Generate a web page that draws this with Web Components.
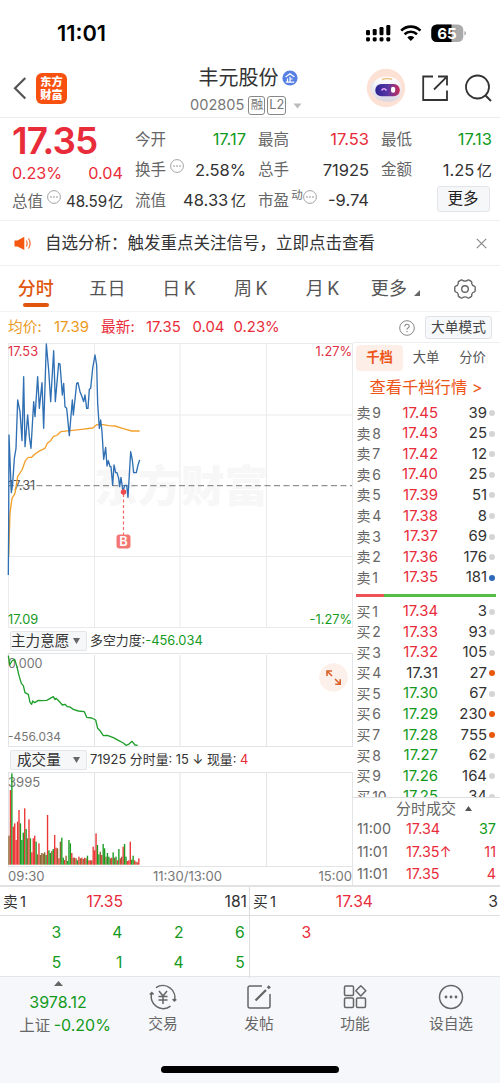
<!DOCTYPE html>
<html lang="zh-CN">
<head>
<meta charset="utf-8">
<title>丰元股份 002805</title>
<style>
html,body{margin:0;padding:0;background:#fff}
body{width:500px;height:1083px;overflow:hidden;font-family:Inter,"Noto Sans CJK SC",sans-serif;color:#333;line-height:1}
</style>
</head>
<body>
<stock-app></stock-app>
<script>
const BASE=`*{box-sizing:border-box}:host{display:block;line-height:1}svg{display:block;flex:none}
.r{color:#e82c3a}.g{color:#139a1c}.k{color:#333}.row{display:flex;align-items:center}`;
function define(name,css,html){
  customElements.define(name,class extends HTMLElement{
    constructor(){
      super();
      this.attachShadow({mode:'open'}).innerHTML=`<style>${BASE}${css}</style>${typeof html==='function'?html(this):html}`;
    }
  });
}

define('status-bar',`:host{height:62px}
.row{height:62px;padding:5px 33.5px 0 57px;justify-content:space-between}
.time{font-size:21.8px;font-weight:600;color:#000;letter-spacing:0;margin-top:1px}`,
`<div class="row"><span class="time">11:01</span>
<svg width="102" height="20" viewBox="0 0 102 20">
<g fill="#000"><rect x="1" y="6" width="4" height="5.3" rx="1.2"/><rect x="7.7" y="5" width="4" height="6.3" rx="1.2"/><rect x="14.5" y="3" width="4" height="8.3" rx="1.2"/><rect x="21.3" y="1" width="4" height="10.3" rx="1.2"/>
<rect x="1" y="13.3" width="4" height="4.2" rx="1.4"/><rect x="7.7" y="13.3" width="4" height="4.2" rx="1.4"/><rect x="14.5" y="13.3" width="4" height="4.2" rx="1.4"/><rect x="21.3" y="13.3" width="4" height="4.2" rx="1.4"/></g>
<g fill="none" stroke="#000" stroke-width="2.6"><path d="M36.2 6.6a13.7 13.7 0 0 1 19.2 0"/><path d="M39.6 10.3a8.9 8.9 0 0 1 12.4 0"/></g><path d="M42.3 13.4a5 5 0 0 1 7 0l-3.5 3.6z" fill="#000"/>
<clipPath id="b"><rect x="66.3" y=".5" width="32" height="17.6" rx="5.5"/></clipPath>
<g clip-path="url(#b)"><rect x="66" y="0" width="34" height="20" fill="#aaa"/><rect x="66" y="0" width="20.5" height="20" fill="#000"/></g>
<path d="M99.4 7v4.4q1.6-.5 1.6-2.2t-1.6-2.2z" fill="#aaa"/>
<text x="82" y="14.6" text-anchor="middle" font-size="15.2" font-weight="700" fill="#fff" font-family="Inter">65</text></svg></div>`);

define('app-logo',`:host{width:31px;height:31px;border-radius:6px;background:#f8500f;color:#fff;padding:2.5px 0 0 0;text-align:center;font-family:"Noto Sans CJK SC",sans-serif;font-weight:900;font-size:11.2px;line-height:13px}
div{height:13px}`,`<div>东方</div><div>财富</div>`);

define('robot-avatar',`:host{width:40px;height:40px}`,
`<svg width="40" height="40" viewBox="0 0 40 40"><defs><linearGradient id="f"><stop offset="0" stop-color="#2b2391"/><stop offset=".5" stop-color="#5636a5"/><stop offset="1" stop-color="#c92c58"/></linearGradient>
<linearGradient id="h" x2="0" y2="1"><stop offset="0" stop-color="#fff"/><stop offset="1" stop-color="#d9d6e2"/></linearGradient></defs>
<circle cx="20" cy="20" r="19.2" fill="#fde1d4"/><ellipse cx="7.5" cy="20" rx="3.2" ry="6.5" fill="#e8e5ec"/><path d="M6.5 19Q8 9 21 8.500Q34 9 35.500 20Q36 31 28 33Q19 35 11 31Q6 28 6.500 19Z" fill="url(#h)"/>
<path d="M16 11.500Q21 9.500 26 11.500" stroke="#e8c587" stroke-width="1.600" fill="none"/><rect x="9.3" y="16" width="24.500" height="12.300" rx="6" fill="url(#f)"/><path d="M15.500 22.500q2.500-3.500 5 0" fill="none" stroke="#eaf" stroke-width="1.500"/><rect x="25" y="18.700" width="4.200" height="6" rx="2" fill="#fff"/></svg>`);

define('stock-header',`:host{height:56px;border-bottom:1px solid #ececec}
.row{height:55px}
.row .row{padding-bottom:3px}
.row .left{width:178px;padding-left:13px;gap:8px}
.mid{width:140px;display:flex;flex-direction:column;align-items:center;gap:6px;padding-top:2px}
.name{font-size:20px;gap:3px;display:flex;align-items:center;height:24px}
.sub{display:flex;align-items:center;gap:4px;font-size:14.600px;color:#777;height:19px;padding-left:1px;width:118px}
.box{border:1px solid #888;border-radius:3px;height:18.500px;font-size:12.500px;display:flex;align-items:center;justify-content:center;width:17px;margin-right:-2px}
.l2{width:18.500px;margin-right:3px;font-size:12.800px}
.right{margin-left:auto;gap:16px;padding-right:7px}`,
`<div class="row"><div class="row left"><svg width="15" height="24" viewBox="0 0 15 24"><path d="M12.300 2L2 12.300L12.300 22.500" fill="none" stroke="#555" stroke-width="2.200"/></svg><app-logo></app-logo></div>
<div class="mid"><div class="name"><span>丰元股份</span><svg width="16" height="16" viewBox="0 0 16 16"><circle cx="8" cy="8" r="7.600" fill="#5680e3"/><path d="M3.600 7L8 3.800L12.400 7M8 6.800V12M8 9H10.600M5.500 8.400V12M3.800 12.200H12.200" stroke="#fff" stroke-width="1.200" fill="none"/></svg></div>
<div class="sub"><span>002805</span><span class="box">融</span><span class="box l2">L2</span><svg width="9" height="6"><path d="M.5 .5H8.500L4.500 5.500Z" fill="#bbb"/></svg></div></div>
<div class="row right"><robot-avatar></robot-avatar>
<svg width="26" height="28" viewBox="0 0 26 28"><path d="M11 2.500H1.200V26H25V16.500M16 2.500H25V11.500M24.700 2.800L12 15.500" fill="none" stroke="#333" stroke-width="1.800"/></svg>
<svg width="28" height="28" viewBox="0 0 28 28" style="margin-left:1px"><circle cx="12.500" cy="13" r="11.500" fill="none" stroke="#333" stroke-width="1.800"/><path d="M20.500 21.500L26 27" stroke="#333" stroke-width="1.900"/></svg></div></div>`);

define('hint-dots',`:host{width:14px;height:14px;display:inline-block;flex:none}`,
`<svg width="14" height="14" viewBox="0 0 14 14"><circle cx="7" cy="7" r="6.400" fill="none" stroke="#999" stroke-width=".9"/><g fill="#888"><circle cx="4" cy="7" r=".8"/><circle cx="7" cy="7" r=".8"/><circle cx="10" cy="7" r=".8"/></g></svg>`);

define('quote-panel',`:host{height:103px;border-bottom:1px solid #f0f0f0;padding:6px 8px 0 12px}
.grid{display:grid;grid-template-columns:repeat(4,111px);column-gap:12px}
.col{display:flex;flex-direction:column}
.c{height:30.700px;display:flex;align-items:center;justify-content:space-between;font-size:16.500px}
.c label{display:flex;align-items:center;color:#666;font-size:15.500px;gap:4px}
.big{height:35px;font-size:36.900px;font-weight:600;letter-spacing:-.9px;display:flex;align-items:center}
.p{height:28px;font-size:16.200px}.t{height:28.500px}
.t>span{font-size:15.200px;letter-spacing:-.15px}
u{text-decoration:none;font-size:15.200px;margin-left:2.500px}
sup{font-size:11.500px;align-self:flex-start;margin:-3px -4px 0 -5px;line-height:1}
button{font:15.500px Inter,"Noto Sans CJK SC";line-height:1;width:53px;height:26px;border:1px solid #e3e5ea;background:#f6f7f9;border-radius:3px;color:#222;margin:-3px 2.500px 0 auto;padding:0}
hint-dots{margin-top:-8px}`,
`<div class="grid">
<div class="col"><div class="big r">17.35</div><div class="c p r"><span>0.23%</span><span>0.04</span></div><div class="c t"><label>总值<hint-dots></hint-dots></label><span>48.59<u style="margin-left:1px">亿</u></span></div></div>
<div class="col"><div class="c"><label>今开</label><span class="g">17.17</span></div><div class="c"><label>换手<hint-dots></hint-dots></label><span>2.58%</span></div><div class="c"><label>流值</label><span>48.33<u>亿</u></span></div></div>
<div class="col"><div class="c"><label>最高</label><span class="r">17.53</span></div><div class="c"><label>总手</label><span>71925</span></div><div class="c"><label>市盈<sup>&nbsp;动</sup><hint-dots></hint-dots></label><span>-9.74</span></div></div>
<div class="col"><div class="c"><label>最低</label><span class="g">17.13</span></div><div class="c"><label>金额</label><span>1.25<u>亿</u></span></div><div class="c"><button>更多</button></div></div>
</div>`);

define('notice-bar',`:host{height:45px;border-bottom:1px solid #f0f0f0}
.row{height:44px;padding:0 13px 0 14px}
span{font-size:16.500px;margin-left:13px;flex:1}`,
`<div class="row"><svg width="18" height="15" viewBox="0 0 18 15"><path d="M.5 4.500H3.500L10.300 .8V14L3.500 10.500H.5Z" fill="#f4570f"/><path d="M12.200 4.500q2 3 0 6M14.500 2.500q3.200 5 0 10" fill="none" stroke="#f4773a" stroke-width="1.300"/></svg><span><slot></slot></span><svg width="11" height="11" viewBox="0 0 11 11"><path d="M.8 .8L10.200 10.200M10.200 .8L.8 10.200" stroke="#888" stroke-width="1.200"/></svg></div>`);

define('period-tabs',`:host{height:46px;border-bottom:1px solid #f3f3f3}
.bar{display:grid;grid-template-columns:repeat(5,71.700px) 66px 81px;height:45px}
div div{display:flex;align-items:center;justify-content:center;font-size:18px;color:#555;position:relative;letter-spacing:.2px;word-spacing:-2px}
.on{color:#e0560f;font-weight:500}.on::after{content:"";position:absolute;left:23px;bottom:4px;width:26px;height:4px;border-radius:2px;background:#e0560f}
.tri{align-self:flex-end;margin:0 0 15px 7px}`,
`<div class="bar"><div class="on">分时</div><div>五日</div><div>日 K</div><div>周 K</div><div>月 K</div><div style="padding-left:8px">更多<svg class="tri" width="6" height="6"><path d="M6 0V6H0Z" fill="#666"/></svg></div>
<div><svg width="22" height="20" viewBox="0 0 22 20"><path d="M7.300 .9Q8.200 .7 9 1.600Q11 2.700 13 1.600Q13.800 .7 14.700 .9L17.500 2.600Q18 3.300 17.700 4.500Q18 6.500 20.300 7.200Q21.200 7.700 21.200 8.300V11.700Q21.200 12.300 20.300 12.800Q18 13.500 17.700 15.500Q18 16.700 17.500 17.400L14.700 19.100Q13.800 19.300 13 18.400Q11 17.300 9 18.400Q8.200 19.300 7.300 19.100L4.500 17.400Q4 16.700 4.300 15.500Q4 13.500 1.700 12.800Q.8 12.300 .8 11.700V8.300Q.8 7.700 1.700 7.200Q4 6.500 4.300 4.500Q4 3.300 4.500 2.600Z" fill="none" stroke="#666" stroke-width="1.400"/><circle cx="11" cy="10" r="3.300" fill="none" stroke="#666" stroke-width="1.400"/></svg></div></div>`);

define('price-line',`:host{height:30px}
.row{height:30px;padding:1px 8px 0;font-size:14.900px}
.c{font-size:14.700px;width:46px}
.o{color:#eb9a1d}.m{margin-left:10px;font-size:13.700px;border:1px solid #e0e2e7;background:#f7f8fa;border-radius:3px;width:67px;height:23px;display:flex;align-items:center;justify-content:center;color:#444}`,
`<div class="row"><span class="o c">均价:</span><span class="o" style="width:47px">17.39</span><span class="r c" style="width:45px">最新:</span><span class="r" style="width:46.500px">17.35</span><span class="r" style="width:41px">0.04</span><span class="r">0.23%</span>
<svg width="16" height="16" viewBox="0 0 16 16" style="margin-left:auto"><circle cx="8" cy="8" r="7.300" fill="none" stroke="#888"/><path d="M5.800 6.400Q5.900 4.200 8 4.200T10.200 6.200Q10.200 7.200 9 7.900T8 9.700M8 10.900V12.200" fill="none" stroke="#888" stroke-width="1.100"/></svg><div class="m">大单模式</div></div>`);

define('price-chart',`:host{height:286px}text{font-size:12.800px}`,
`<svg width="353" height="286" viewBox="0 342 353 286">
<text x="94" y="502" style="font-size:43.500px" font-weight="900" fill="#f7f7f7">东方财富</text>
<path d="M8 343.500H353M8 415H353M8 556.500H353M8 627.500H353M8.500 343V628M94.500 343V628M180 343V628M266.500 343V628M352.500 343V628" stroke="#e9eaec" fill="none"/>
<text x="8" y="355.500" fill="#e02d42">17.53</text><text x="352" y="355.500" text-anchor="end" fill="#e02d42">1.27%</text>
<text x="8" y="624" fill="#139a1c">17.09</text><text x="352" y="624" text-anchor="end" fill="#139a1c">-1.27%</text>
<text x="8" y="490" fill="#555">17.31</text>
<path d="M8 485.700H352" stroke="#777" stroke-width="1" stroke-dasharray="6 3.500"/>
<g transform="translate(0 340) scale(.33333)" fill="none" stroke-linejoin="round">
<polyline stroke="#f2a02b" stroke-width="4" points="26,650 28,580 30,520 36,475 45,460 53,410 66,390 76,362 85,352 95,352 105,342 120,332 135,325 142,310 152,302 160,290 172,285 182,275 210,272 245,268 278,264 290,254 310,254 325,257 345,258 370,266 395,273 419,273"/>
<polyline stroke="#2f6fb3" stroke-width="4" points="25,705 26,560 27,285 30,360 34,458 38,430 43,355 48,325 53,180 60,215 66,302 71,110 75,320 83,225 88,290 93,325 101,185 105,230 113,110 118,205 126,128 131,265 139,12 146,90 152,185 161,32 166,185 176,70 180,72 187,165 191,130 195,200 200,205 208,287 217,180 220,225 230,130 234,128 240,155 246,170 251,185 255,165 260,205 264,205 268,148 272,145 278,85 285,45 290,75 293,190 298,265 302,240 306,275 311,358 317,322 321,378 325,362 330,380 333,380 338,436 342,375 347,398 351,398 356,415 359,440 363,412 369,455 374,436 380,436 384,472 392,335 397,360 401,398 409,398 414,375 419,360"/></g>
<path d="M123.500 494V535" stroke="#ef6a68" stroke-dasharray="3 2.500" stroke-width="1.200"/><circle cx="123.500" cy="492" r="2.700" fill="#f04a4d"/>
<rect x="116.500" y="534.500" width="14" height="14" rx="3" fill="#f47673"/><text x="123.500" y="546" text-anchor="middle" fill="#fff" font-weight="600">B</text></svg>`);

define('indicator-row',`:host{height:25px}
.row{height:25px;padding:1.500px 0 0 10px;font-size:13.300px;gap:3px}
.sel{width:77px;height:20px;background:#f6f7f9;border:1px solid #e3e5e8;border-radius:2px;font-size:14.600px;display:flex;align-items:center;justify-content:space-between;padding:0 6px 0 0}
.v{white-space:pre;font-size:12.900px}`,
`<div class="row"><div class="sel"><slot name="name"></slot><svg width="7" height="6"><path d="M0 0H7L3.500 6Z" fill="#666"/></svg></div><div class="v"><slot></slot></div></div>`);

define('intent-chart',`:host{height:94px;position:relative}text{font-size:12.500px;fill:#777}
.x{position:absolute;left:319px;top:10px}`,
`<svg width="353" height="94" viewBox="0 653 353 94"><path d="M8 653.500H353M8 746.500H353M8.500 653V747M94.500 655V747M180 655V747M266.500 655V747M352.500 653V747" stroke="#e3e4e6" fill="none"/>
<text x="8" y="667.500">0.000</text><text x="8" y="741" style="font-size:11.900px">-456.034</text>
<g transform="translate(0 625) scale(.33333)"><polyline fill="none" stroke="#1e9e2a" stroke-width="4" stroke-linejoin="round" points="25,92 29,120 36,108 44,103 50,122 57,152 64,175 70,182 75,203 85,208 90,232 95,238 98,228 104,233 115,226 125,227 140,226 160,215 165,224 168,220 176,227 187,240 195,238 202,245 210,246 220,253 235,258 253,260 260,277 275,279 287,285 293,310 300,317 310,332 322,331 340,338 355,346 370,354 378,361 386,358 396,349 405,360 413,361"/></g></svg>
<svg class="x" width="29" height="29" viewBox="0 0 29 29"><circle cx="14.500" cy="14.500" r="14.300" fill="#fdf0ea"/><path d="M13 13L8 8M8 13V8H13M16 16L21 21M16.200 21.200H21.200V16.200" fill="none" stroke="#d9622b" stroke-width="1.600"/></svg>`);

const VOL='632n 495r 445g 605r 595r 645r 590r 555r 595g 645g 623g 550r 612g 640n 583r 640g 682r 640r 632r 650g 688n 655r 690n 684n 686n 682n 690g 570r 676g 684g 678n 672g 630r 668r 670n 700r 650n 638g 698g 705r 692n 708g 645g 655g 684r 698n 698r 700n 706g 695r 700n 698r 702n 698r 700n 692g 706r 706r 706n 665r 676r 625r 660g 688g 680n 690r 657g 670g 695n 684g 695g 700n 698r 682g 698n 695g 706r 672g 700r 695n 665r 657g 695g 708r 706r 650r 704g 692g 706r 710n 712r 700r'.split(' ');
define('volume-chart',`:host{height:113px}text{font-size:13.100px;fill:#777}`,()=>{
  const col={r:'#ec3535',g:'#1a9c21',n:'#8d6531'};
  const bars=VOL.map((v,i)=>{const t=parseInt(v);return `<rect x="${25+i*4.28}" y="${t}" width="4.100" height="${719-t}" fill="${col[v.at(-1)]}"/>`}).join('');
  return `<svg width="353" height="113" viewBox="0 772 353 113"><path d="M8 772.500H353M8 866.500H353M8.500 772V866M94.500 772V866M180 772V866M266.500 772V866M352.500 772V885" stroke="#e3e4e6" fill="none"/>
<text x="8" y="786.500">3995</text><g transform="translate(0 625) scale(.33333)">${bars}</g>
<text x="8" y="881">09:30</text><text x="187.500" y="881" text-anchor="middle">11:30/13:00</text><text x="352" y="881" text-anchor="end">15:00</text></svg>`});

const SELL=[[9,'17.45',39],[8,'17.43',25],[7,'17.42',12],[6,'17.40',25],[5,'17.39',51],[4,'17.38',8],[3,'17.37',69],[2,'17.36',176],[1,'17.35',181,'b']];
const BUY=[[1,'17.34',3],[2,'17.33',93],[3,'17.32',105],[4,'17.31',27,'o'],[5,'17.30',67],[6,'17.29',230,'o'],[7,'17.28',755,'o'],[8,'17.27',62],[9,'17.26',164],[10,'17.25',34]];
const level=(side,[n,p,q,d=''])=>`<div class="lv"><label>${side} ${n}</label><span class="${p>'17.31'?'r':p<'17.31'?'g':'k'}">${p}</span><b>${q}</b><i class="${d}"></i></div>`;
define('order-book',`:host{height:454px;overflow:hidden;padding:2px 4px 0 3px}
.tabs{display:grid;grid-template-columns:47px 46px 47px;height:27px;font-size:13.300px;color:#555}
.tabs div{display:flex;align-items:center;justify-content:center;height:26px}
.tabs .on{background:#fdeee8;border-radius:4px;color:#ee5618;font-weight:700}
.more{height:31px;display:flex;align-items:center;justify-content:center;color:#ee5618;font-size:16.300px;white-space:pre}
.lv{display:grid;grid-template-columns:33px 49px 49px 9px;height:20.550px;align-items:center;font-size:14.900px}
.lv label{color:#666;padding-left:.500px;white-space:nowrap;font-size:14px;word-spacing:-2.300px}.lv span,.lv b{text-align:right;font-weight:400}
.lv i{width:6px;height:6px;border-radius:50%;background:#d5d5d5;margin-left:2px}.lv i.b{background:#2d69b8}.lv i.o{background:#e8590c}
.ratio{height:3px;background:linear-gradient(90deg,#ec5256 20%,#56bd47 20%);margin:6px 0 4.500px}`,
()=>`<div class="tabs"><div class="on">千档</div><div>大单</div><div>分价</div></div><div class="more">查看千档行情 &gt;</div>${SELL.map(l=>level('卖',l)).join('')}<div class="ratio"></div>${BUY.map(l=>level('买',l)).join('')}`);

define('trade-list',`:host{height:88px;border-top:1px solid #ddd;padding:0 4px 0 4px;font-size:14.400px}
.h{height:20px;display:flex;align-items:center;justify-content:center;font-size:15px;color:#666;gap:9px;padding-left:15px}
.t{display:grid;grid-template-columns:49px 1fr auto;height:22.500px;align-items:center;color:#666}`,
`<div class="h">分时成交<svg width="7" height="5"><path d="M0 5H7L3.500 0Z" fill="#555"/></svg></div>
<div class="t"><span>11:00</span><span class="r">17.34</span><span class="g">37</span></div><div class="t"><span>11:01</span><span class="r">17.35↑</span><span class="r">11</span></div><div class="t"><span>11:01</span><span class="r">17.35</span><span class="r">4</span></div>`);

define('market-view',`:host{display:flex;height:543px}.l{width:353px}.rt{width:147px;border-top:1px solid #eee}`,
`<div class="l"><price-chart></price-chart><indicator-row><span slot="name">主力意愿</span>多空力度:<span style="color:#139a1c">-456.034</span></indicator-row><intent-chart></intent-chart>
<indicator-row><span slot="name" style="padding-left:6px">成交量</span>71925 分时量: 15 ↓ 现量: <span style="color:#e82c3a">4</span></indicator-row><volume-chart></volume-chart></div>
<div class="rt"><order-book></order-book><trade-list></trade-list></div>`);

define('queue-panel',`:host{height:91px;border-top:2px solid #e2e2e2;font-size:15.700px}
.w{display:grid;grid-template-columns:249px 251px;height:89px}
.w>div+div{border-left:1px solid #ddd}
.hd{display:grid;grid-template-columns:60px 60px 1fr;align-items:center;height:29px;border-bottom:1px solid #ddd;padding:2px 2px 0 3px;white-space:nowrap}
.hd span:first-child{font-size:14.800px;word-spacing:-2px}
.hd span:not(:first-child){text-align:right}
.q{display:grid;grid-template-columns:repeat(4,61.200px);height:30px;align-items:center;text-align:right}.hd+.q{margin-top:1.500px}`,
`<div class="w"><div><div class="hd"><span>卖 1</span><span class="r">17.35</span><span>181</span></div><div class="q g"><span>3</span><span>4</span><span>2</span><span>6</span></div><div class="q g"><span>5</span><span>1</span><span>4</span><span>5</span></div></div>
<div><div class="hd"><span>买 1</span><span class="r">17.34</span><span>3</span></div><div class="q r"><span>3</span></div></div></div>`);

define('nav-item',`:host{display:flex;flex-direction:column;align-items:center;gap:7px;padding-top:7px;font-size:14.700px;color:#666}`,`<slot name="icon"></slot><slot></slot>`);

define('bottom-nav',`:host{height:108px;background:#f6f7fa;border-top:1px solid #e4e5e8}
.n{display:grid;grid-template-columns:115px repeat(4,96px);height:89px;width:500px}
.idx{display:flex;flex-direction:column;align-items:center;padding:4px 0 0 15px;font-size:16px}
.idx svg,.idx .v{margin-right:14px}
.idx div{margin-top:8px;white-space:pre;word-spacing:-1px}.idx div+div{margin-top:6.500px}
nav-item svg{stroke:#666;stroke-width:1.500;fill:none}
.home{width:178px;height:6.500px;border-radius:4px;background:#000;margin:0 auto}`,
`<div class="n"><div class="idx"><svg width="9" height="5"><path d="M0 5H9L4.500 0Z" fill="#666"/></svg><div class="g v">3978.12</div><div class="g"><span style="color:#666;font-size:15.500px">上证</span> -0.20%</div></div>
<nav-item><svg slot="icon" width="28" height="26" viewBox="0 0 28 26"><path d="M6.500 4Q13-1.500 20 3.500M24.200 7.500Q27 14 23.300 19.500M23 4.500L25.500 7M25.500 15l-.5 3.500L27.500 17M21 22Q14 27.500 7 22.500M4.200 19Q.8 13 4.200 6.500M1 8.500L4.500 6.500L5 10M10 7L14 12L18 7M14 12V20M9.500 12.500H18.500M9.500 16H18.500" style="display:none"/><path d="M7 3.600A12 12 0 0 1 25.300 17M27.300 15.400L25.300 17L23.700 15M21.500 22.200A12 12 0 0 1 2.800 9M.8 10.600L2.800 8.500L4.600 10.600M10 7L14 12L18 7M14 12V20M9.500 12.500H18.500M9.500 16H18.500"/></svg>交易</nav-item>
<nav-item><svg slot="icon" width="26" height="26" viewBox="0 0 26 26"><path d="M16 2H4Q2 2 2 4V22Q2 24 4 24H22Q24 24 24 22V10"/><path d="M9.500 16.500L20 6" stroke-width="2.300"/><path d="M21.800 4.300L23.800 2.300" stroke-width="3"/></svg>发帖</nav-item>
<nav-item><svg slot="icon" width="26" height="26" viewBox="0 0 26 26"><rect x="2.500" y="2" width="9" height="9.500" rx="1.200"/><rect x="2.500" y="14" width="9" height="9.500" rx="1.200"/><rect x="14.500" y="14" width="9" height="9.500" rx="1.200"/><path d="M18.800 1.700L23.800 6.800L18.800 12L13.800 6.800Z" stroke-linejoin="round"/></svg>功能</nav-item>
<nav-item><svg slot="icon" width="26" height="26" viewBox="0 0 26 26"><circle cx="13" cy="13" r="11.500"/><g fill="#666" stroke="none"><circle cx="8" cy="13" r="1.400"/><circle cx="13" cy="13" r="1.400"/><circle cx="18" cy="13" r="1.400"/></g></svg>设自选</nav-item></div><div class="home"></div>`);

define('stock-app',`:host{width:500px;height:1083px;background:#fff}`,
`<status-bar></status-bar><stock-header></stock-header><quote-panel></quote-panel><notice-bar>自选分析：触发重点关注信号，立即点击查看</notice-bar><period-tabs></period-tabs><price-line></price-line><market-view></market-view><queue-panel></queue-panel><bottom-nav></bottom-nav>`);
</script>
</body>
</html>
